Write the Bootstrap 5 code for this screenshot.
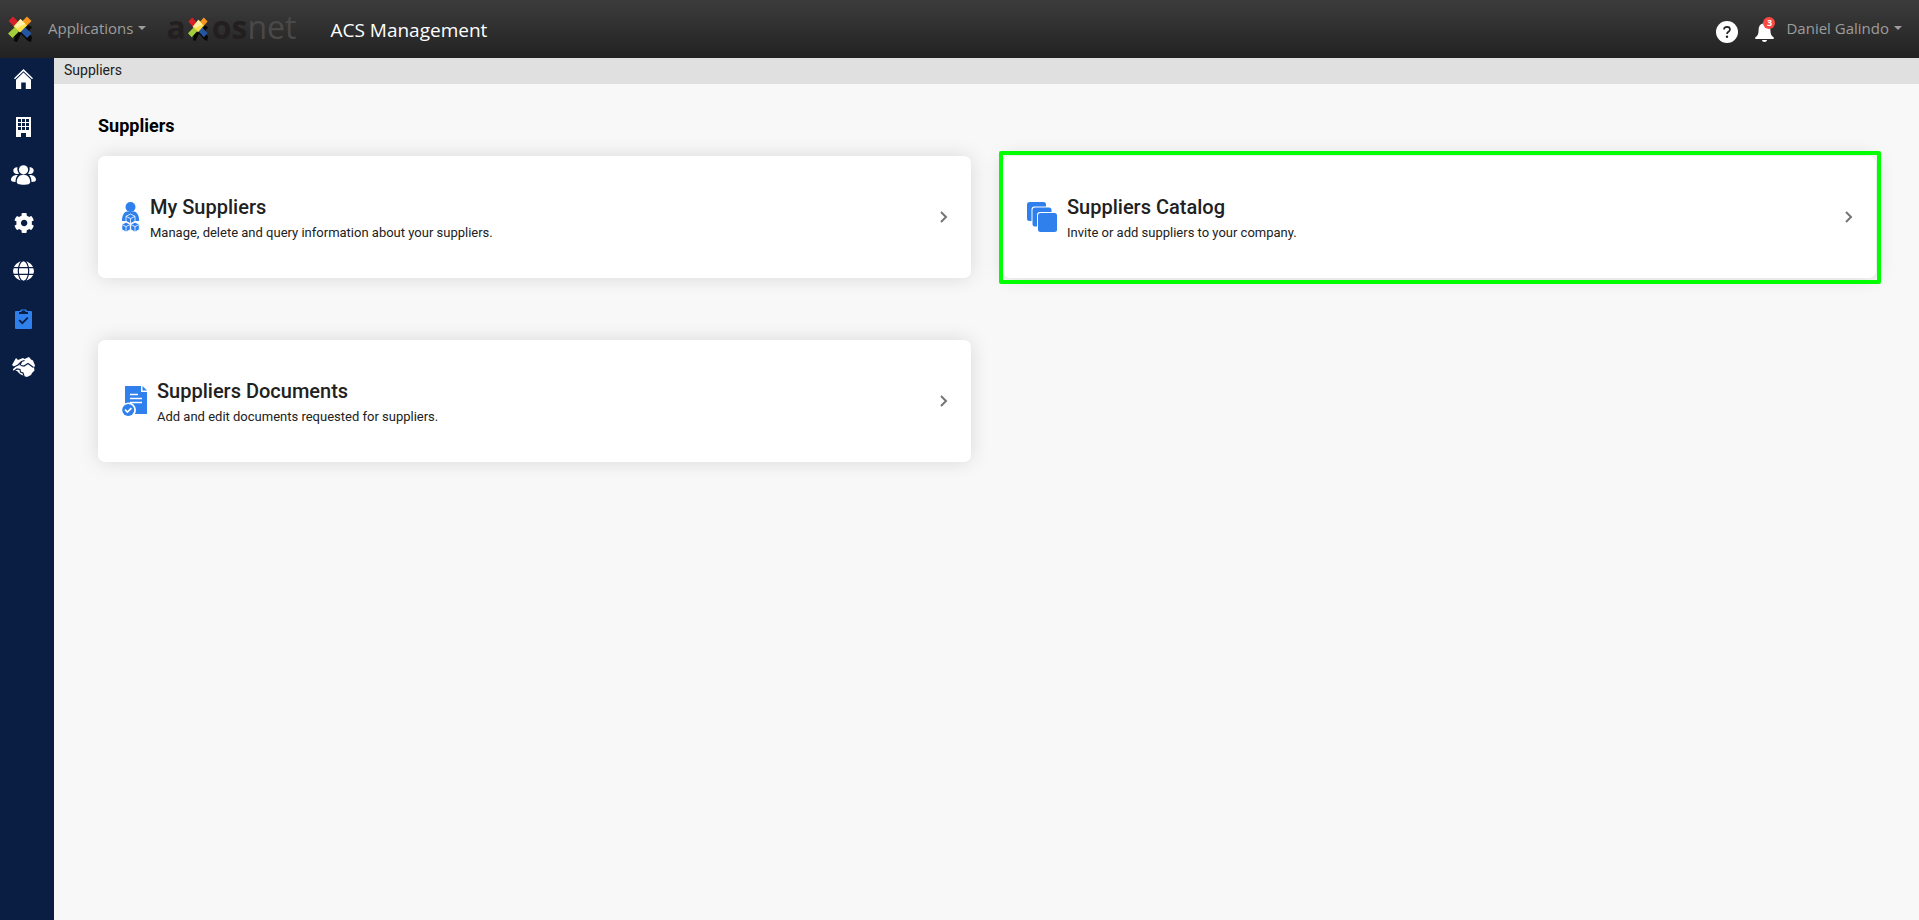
<!DOCTYPE html>
<html lang="en">
<head>
<meta charset="utf-8">
<meta name="viewport" content="width=device-width, initial-scale=1">
<title>ACS Management - Suppliers</title>
<link href="https://cdn.jsdelivr.net/npm/bootstrap@5.3.0/dist/css/bootstrap.min.css" rel="stylesheet">
<style>
  body { font-family: Roboto, "Liberation Sans", sans-serif; background: #f8f8f8; color: #212121; }
  svg { display: block; flex: none; }
  .topbar { height: 58px; padding: 0 17px 0 8px; background: linear-gradient(#3c3c3c, #222); font-family: "Open Sans", "Noto Sans", sans-serif; }
  .topbar .menu-btn { color: #9d9d9d; font-size: 15px; line-height: 24px; background: none; border: 0; padding: 0 0 2px; }
  .menu-btn.dropdown-toggle::after { margin-left: 5px; }
  .brand-word { font-size: 32px; line-height: 40px; color: #231f20; font-weight: 700; margin-left: 20px; padding-bottom: 4px; }
  .brand-word svg { margin: 4px 4px 0 2px; }
  .brand-word .thin { color: #4b4848; font-weight: 400; }
  .app-title { font-size: 19px; line-height: 28px; margin-left: 34px; padding-top: 2px; }
  .tools { padding-top: 6px; gap: 17px; margin-right: 12px; }
  .tools button { background: none; border: 0; padding: 0; }
  .notice-count { position: absolute; right: -1px; top: -5px; width: 12px; height: 12px; border-radius: 50%; background: #fb4a41; color: #fff; font-size: 9px; line-height: 12px; font-weight: 700; text-align: center; }
  .sidebar { width: 54px; background: #0a1e44; color: #fff; padding: 11px 0 11px 11px; gap: 28px; flex: none; }
  .sidebar a { color: #fff; width: 25px; height: 20px; }
  .sidebar a.active { color: #2f80ed; }
  .crumbs { background: #e0e0e0; height: 26px; padding: 0 10px; font-size: 14px; line-height: 24px; }
  .content { padding: 30px 43px 44px 44px; }
  .content h1 { font-size: 18px; line-height: 24px; font-weight: 700; color: #000; margin: 0 0 18px; }
  .tiles { --bs-gutter-x: 32px; --bs-gutter-y: 62px; }
  .tile { min-height: 122px; padding: 0 23px 0 24px; gap: 10px; background: #fff; color: #212121; border-radius: 7px; text-decoration: none; box-shadow: 0 0 20px rgba(0,0,0,.13); position: relative; }
  .tile h2 { font-size: 20px; line-height: 26px; font-weight: 500; margin: 3px 0 0; }
  .tile p { font-size: 13px; line-height: 20px; margin: 3px 0 0; }
  .tile .tile-icon { color: #2f80ed; }
  .tile .chev { color: #757575; }
  .tile.picked::after { content: ""; position: absolute; inset: -5px -5px -6px -4px; border: 4px solid #0f0; border-radius: 2px; pointer-events: none; }
</style>
</head>
<body class="d-flex flex-column min-vh-100">
<svg width="0" height="0" class="position-absolute" aria-hidden="true">
  <symbol id="xmark" viewBox="0 0 24 26" preserveAspectRatio="none">
    <path d="M20 9l4 2-4 5 4 5-1 5-3-1-7-7-4 8-3-1 1-4-5-3z" fill="#070707"/>
    <path d="M0.500 5L5 0.500 11 6.500 6.500 11z" fill="#d8202b"/>
    <path d="M23.500 5L19 0.500 13 6.500 17.500 11z" fill="#f7981d"/>
    <path d="M0 17.500L7 11l4 4.500L4.500 22z" fill="#a3cd39"/>
    <path d="M23.500 17.500L17 11l-4.500 4.500L19 22z" fill="#2455a4"/>
    <path d="M12.500 3l6.500 6.500-7 7-6.500-6z" fill="#fddf4e"/>
    <path d="M12.500 3l5 5-9 4-2-2z" fill="#fdf0a6"/>
  </symbol>
  <symbol id="chevron" viewBox="0 0 8 12"><path d="M1 1l5 5-5 5" fill="none" stroke="currentColor" stroke-width="2"/></symbol>
</svg>

<header class="topbar d-flex align-items-center">
  <a href="#" aria-label="Home"><svg width="24" height="26"><use href="#xmark"/></svg></a>
  <button class="menu-btn dropdown-toggle ms-3" type="button" data-bs-toggle="dropdown">Applications</button>
  <div class="brand-word d-flex align-items-center"><span>a</span><svg width="20" height="24"><use href="#xmark" width="20" height="24"/></svg><span>os<span class="thin">net</span></span></div>
  <div class="app-title text-white">ACS Management</div>
  <div class="tools d-flex align-items-center ms-auto">
    <button type="button" aria-label="Help">
      <svg width="22" height="22" viewBox="0 0 22 22"><circle cx="11" cy="11" r="11" fill="#fff"/><path d="M8 8.600c0-1.800 1.300-2.700 3-2.700s3 1 3 2.600c0 2.200-3 2.300-3 4.400" fill="none" stroke="#222" stroke-width="1.600"/><circle cx="11" cy="15.700" r="1.200" fill="#222"/></svg>
    </button>
    <button type="button" class="position-relative" aria-label="Notifications">
      <svg width="19" height="20" viewBox="0 0 19 20"><path d="M9.500 0c-1 0-1.500.6-1.500 1.500C4.800 2.200 3.600 4.800 3.600 8c0 4-1 6-3.300 7.300V17h18.400v-1.700C16.400 14 15.400 12 15.400 8c0-3.200-1.200-5.800-4.400-6.500C11 .6 10.500 0 9.500 0zM7 18h5c0 1.300-1.200 2-2.500 2S7 19.300 7 18z" fill="#fff"/></svg>
      <span class="notice-count">3</span>
    </button>
  </div>
  <button class="menu-btn dropdown-toggle" type="button" data-bs-toggle="dropdown">Daniel Galindo</button>
</header>

<div class="d-flex flex-grow-1">
  <nav class="sidebar d-flex flex-column" aria-label="Main">
    <a href="#" aria-label="Home"><svg width="25" height="20" viewBox="0 0 25 20" fill="currentColor"><path d="M12.500 0L3 9.200l1 1 8.500-8 8.500 8 1-1z"/><path d="M12.500 3.600L5 10.700V20h5.200v-6.500h4.600V20H20v-9.300z"/></svg></a>
    <a href="#" aria-label="Companies"><svg width="25" height="20" viewBox="0 0 25 20" fill="currentColor" fill-rule="evenodd"><path d="M5 0h15v20h-5v-4h-5v4H5zM7 2v3h3V2zM11 2v3h3V2zM15 2v3h3V2zM7 6v3h3V6zM11 6v3h3V6zM15 6v3h3V6zM7 10v3h3v-3zM11 10v3h3v-3zM15 10v3h3v-3z"/></svg></a>
    <a href="#" aria-label="Users"><svg width="25" height="20" viewBox="0 0 25 20" fill="currentColor"><circle cx="12.500" cy="4.800" r="4.600"/><path d="M12.500 9.800c-4 0-6.700 2.700-6.700 7.400 0 1.700 2.600 2.500 6.700 2.500s6.700-.8 6.700-2.500c0-4.700-2.700-7.400-6.700-7.400z"/><path d="M6.500 2.200C4 2 2.300 3.500 2.300 5.500s1.500 3.600 3.500 3.600c.9 0 1.700-.3 2.200-.7C6.500 6.600 6 4.400 6.500 2.200zM18.500 2.200c2.500-.2 4.200 1.300 4.200 3.300s-1.500 3.600-3.500 3.600c-.9 0-1.700-.3-2.200-.7 1.500-1.800 2-4 1.500-6.200zM6.800 10C2.500 9.700 0 12 0 15c0 1.300 1.500 2 4.500 2 0-2.800.8-5.300 2.300-7zM18.200 10c4.300-.3 6.800 2 6.800 5 0 1.300-1.500 2-4.500 2 0-2.800-.8-5.300-2.300-7z"/></svg></a>
    <a href="#" aria-label="Settings"><svg width="26" height="20" viewBox="-70 8 645 496" fill="currentColor"><path d="M487.400 315.700l-42.600-24.600c4.300-23.200 4.300-47 0-70.200l42.600-24.600c4.900-2.800 7.100-8.600 5.500-14-11.100-35.600-30-67.800-54.700-94.600-3.800-4.100-10-5.100-14.800-2.300L380.800 110c-17.900-15.400-38.500-27.300-60.800-35.100V25.800c0-5.600-3.900-10.500-9.400-11.700-36.700-8.200-74.300-7.800-109.200 0-5.500 1.200-9.400 6.100-9.400 11.700V75c-22.200 7.900-42.800 19.800-60.800 35.100L88.700 85.500c-4.900-2.800-11-1.900-14.800 2.300-24.700 26.700-43.600 58.900-54.700 94.600-1.700 5.400.6 11.200 5.500 14L67.300 221c-4.300 23.200-4.300 47 0 70.200l-42.600 24.600c-4.900 2.800-7.100 8.600-5.500 14 11.100 35.600 30 67.800 54.700 94.600 3.800 4.100 10 5.100 14.800 2.300l42.600-24.600c17.900 15.400 38.500 27.300 60.800 35.100v49.200c0 5.600 3.900 10.500 9.400 11.700 36.700 8.200 74.300 7.800 109.200 0 5.500-1.200 9.400-6.100 9.400-11.700v-49.200c22.200-7.900 42.800-19.800 60.800-35.100l42.600 24.600c4.900 2.800 11 1.900 14.800-2.300 24.700-26.700 43.600-58.900 54.700-94.600 1.500-5.500-.7-11.300-5.600-14.100zM256 336c-44.100 0-80-35.900-80-80s35.900-80 80-80 80 35.900 80 80-35.900 80-80 80z"/></svg></a>
    <a href="#" aria-label="Network"><svg width="25" height="20" viewBox="0 0 25 20"><ellipse cx="12.500" cy="10" rx="10.500" ry="10" fill="#fff"/><g fill="none" stroke="#0a1e44" stroke-width="1.200"><ellipse cx="12.500" cy="10" rx="5.200" ry="10.400"/><path d="M2 6.600h21M2 13.400h21"/></g></svg></a>
    <a href="#" class="active" aria-label="Suppliers"><svg width="25" height="20" viewBox="0 0 25 20"><path d="M5 2h4l1-1.500h5L16 2h4q1 0 1 1v16q0 1-1 1H5q-1 0-1-1V3q0-1 1-1z" fill="currentColor"/><path d="M8 3h2.200A2.300 1.800 0 0 1 14.800 3H17v2H8z" fill="#0a1e44"/><path d="M8.300 11.200l3 3 5.500-5.500" fill="none" stroke="#0a1e44" stroke-width="1.800"/></svg></a>
    <a href="#" aria-label="Partners"><svg width="25" height="20" viewBox="0 0 25 20"><path d="M1 8l4-7 2 2 5-2 1.500 1L18 0l2 2.500 2 1 2 5-1 2 .5 3-2.500 2.500-1 2-4 2-3-1-4-2-3-3-4-.5V12l2-1.500z" fill="#fff"/><path d="M2 10.500l5-2.500 3.500-3.500 3-1M10 8.500l3 .5 4-2.500 5.500 4M10.500 4.500L9 8.500M2.500 14.500L6 12l3 .5.500 2.500 2.500 1 1 3" fill="none" stroke="#0a1e44" stroke-width="1.200"/></svg></a>
  </nav>

  <main class="flex-grow-1">
    <div class="crumbs">Suppliers</div>
    <div class="content">
      <h1>Suppliers</h1>
      <div class="row tiles">
        <div class="col-6">
          <a href="#" class="tile d-flex align-items-center">
            <svg class="tile-icon" width="18" height="30" viewBox="0 0 18 30"><g fill="currentColor"><circle cx="8.500" cy="5" r="5"/><path d="M4.500 9.500h8c3 1.500 4.600 4 4.600 9.500H0C0 13.500 1.500 11 4.500 9.500z"/></g><g fill="currentColor" stroke="#fff" stroke-width=".8"><path d="M8.500 12l4.500 2.300v5l-4.500 2.300L4 19.300v-5z"/><path d="M4 20.300l4.300 2v5.400L4 29.900l-4.200-2.200v-5.400zM13 20.300l4.300 2v5.400L13 29.900l-4.300-2.200v-5.400z"/><path d="M4 14.300l4.500 2.300 4.500-2.300M8.500 16.600v5M0 22.600l4 2 4.200-2M4 24.600v5M8.900 22.600l4.100 2 4.100-2M13 24.600v5" fill="none"/></g></svg>
            <div class="flex-grow-1"><h2>My Suppliers</h2><p>Manage, delete and query information about your suppliers.</p></div>
            <svg class="chev" width="8" height="12"><use href="#chevron"/></svg>
          </a>
        </div>
        <div class="col-6">
          <a href="#" class="tile picked d-flex align-items-center">
            <svg class="tile-icon" width="30" height="30" viewBox="0 0 30 30" fill="currentColor"><rect width="19" height="19" rx="2.500"/><rect x="4.500" y="4.500" width="21" height="21" rx="3" fill="#fff"/><rect x="5.500" y="5.500" width="19" height="19" rx="2.500"/><rect x="10" y="10" width="21" height="21" rx="3" fill="#fff"/><rect x="11" y="11" width="19" height="19" rx="2.500"/></svg>
            <div class="flex-grow-1"><h2>Suppliers Catalog</h2><p>Invite or add suppliers to your company.</p></div>
            <svg class="chev" width="8" height="12"><use href="#chevron"/></svg>
          </a>
        </div>
        <div class="col-6">
          <a href="#" class="tile d-flex align-items-center">
            <svg class="tile-icon" width="25" height="30" viewBox="0 0 25 30"><path d="M3 0h16v6h6v22H3z" fill="currentColor"/><path d="M20.500 0v4.500H25z" fill="currentColor"/><path d="M8 8.500h8M8 12.500h12M8 16.500h12" stroke="#fff" stroke-width="1.500"/><circle cx="6.500" cy="24" r="7.500" fill="#fff"/><circle cx="6.200" cy="24" r="6" fill="currentColor"/><path d="M3 23.700l2.400 2.300 4-3.800" fill="none" stroke="#fff" stroke-width="1.700"/></svg>
            <div class="flex-grow-1"><h2>Suppliers Documents</h2><p>Add and edit documents requested for suppliers.</p></div>
            <svg class="chev" width="8" height="12"><use href="#chevron"/></svg>
          </a>
        </div>
      </div>
    </div>
  </main>
</div>
<script src="https://cdn.jsdelivr.net/npm/bootstrap@5.3.0/dist/js/bootstrap.bundle.min.js"></script>
</body>
</html>
